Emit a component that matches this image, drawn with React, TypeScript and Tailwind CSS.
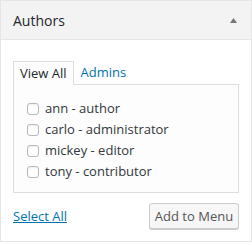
import React from "react";

const users = ["ann - author", "carlo - administrator", "mickey - editor", "tony - contributor"];

export default function App() {
  return (
    <div className="w-[252px] h-[242px] border border-[#e5e5e5] bg-white font-['Open_Sans',sans-serif] text-[13px] text-[#32373c] flex flex-col">
      <div className="h-[39px] shrink-0 border-b border-[#e5e5e5] bg-[#f3f3f3] flex items-center justify-between pl-[12px] pr-[14px]">
        <span className="text-[14px] text-[#23282d] leading-none mt-px">Authors</span>
        <svg width="7" height="5" viewBox="0 0 7 5" className="block">
          <polygon points="3.5,0 7,5 0,5" fill="#72777c" />
        </svg>
      </div>
      <div className="px-[12px] pt-[21px] flex flex-col">
        <div className="flex items-end h-[24px] -mb-px relative z-10">
          <div className="h-[24px] border border-b-0 border-[#dddddd] bg-[#fdfdfd] px-[6px] flex items-center text-[#23282d]">
            View All
          </div>
          <div className="h-[24px] px-[7px] flex items-center text-[#0073aa]">Admins</div>
        </div>
        <div className="h-[109px] border border-[#dddddd] bg-[#fdfdfd] pt-[13px] pl-[13px]">
          {users.map((u) => (
            <div key={u} className="h-[21px] flex items-center">
              <span className="w-[12px] h-[12px] border border-[#b4b9be] rounded-[3px] bg-white shadow-[inset_0_1px_2px_rgba(0,0,0,0.07)] shrink-0" />
              <span className="ml-[6px] leading-none">{u}</span>
            </div>
          ))}
        </div>
        <div className="mt-[10px] flex items-center justify-between">
          <a className="text-[#0073aa] underline leading-none">Select All</a>
          <button className="w-[90px] h-[26px] border border-[#cccccc] rounded-[3px] bg-[#f7f7f7] shadow-[0_1px_0_#cccccc] text-[#555555] text-[13px] leading-none">
            Add to Menu
          </button>
        </div>
      </div>
    </div>
  );
}
